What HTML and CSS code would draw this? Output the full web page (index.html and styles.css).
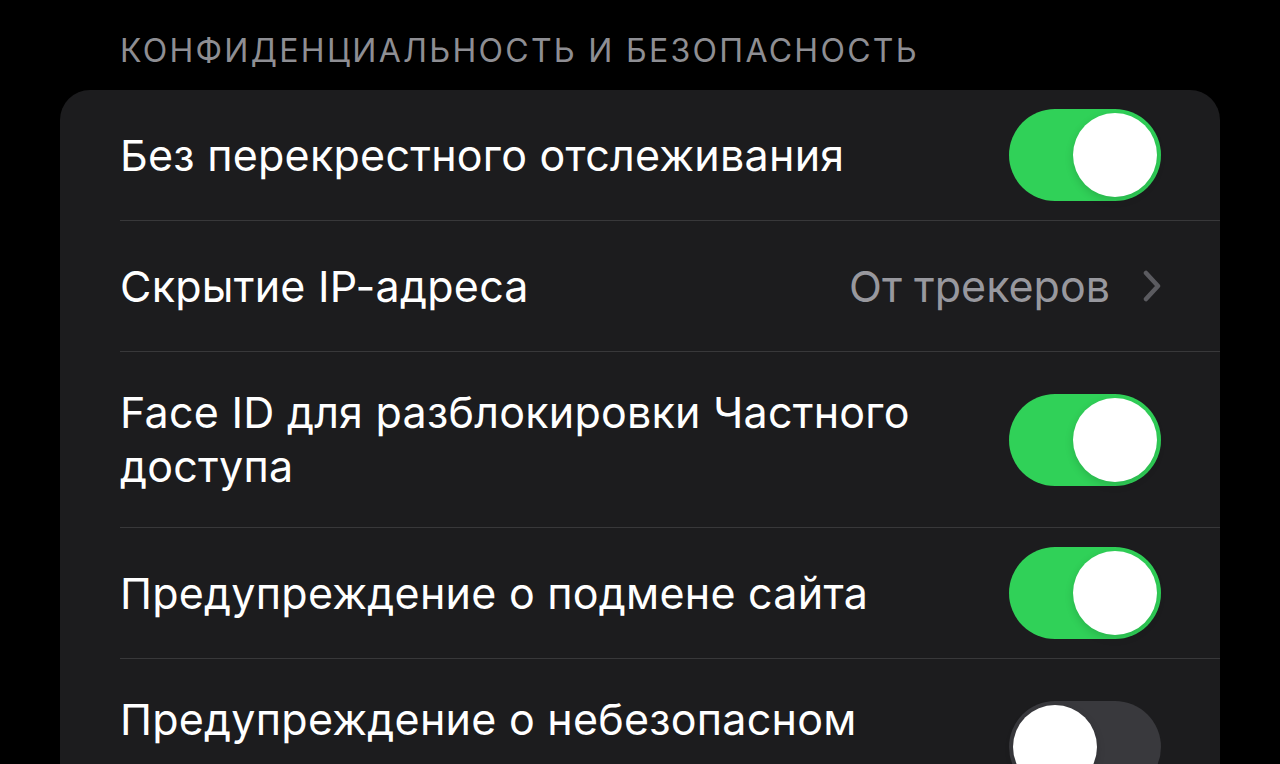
FILE: index.html
```html
<!DOCTYPE html>
<html lang="ru">
<head>
  <meta charset="UTF-8">
  <meta name="viewport" content="width=device-width, initial-scale=1.0">
  <title>Конфиденциальность и безопасность</title>
  <link rel="stylesheet" href="styles.css">
</head>
<body>
  <div class="settings">
    <div class="section-title">КОНФИДЕНЦИАЛЬНОСТЬ И БЕЗОПАСНОСТЬ</div>
    <div class="group">
      <div class="row">
        <div class="row-body">
          <div class="label">Без перекрестного отслеживания</div>
          <div class="switch on" onclick="toggleSwitch(this)"><div class="knob"></div></div>
        </div>
      </div>

      <div class="row">
        <div class="row-body">
          <div class="label">Скрытие IP-адреса</div>
          <div class="detail">
            <span>От трекеров</span>
            <svg class="chevron" width="18" height="32" viewBox="0 0 18 32">
              <path d="M3 3 L15 16 L3 29" fill="none" stroke="currentColor" stroke-width="4.5" stroke-linecap="round" stroke-linejoin="round"/>
            </svg>
          </div>
        </div>
      </div>

      <div class="row">
        <div class="row-body">
          <div class="label">Face ID для разблокировки Частного доступа</div>
          <div class="switch on" onclick="toggleSwitch(this)"><div class="knob"></div></div>
        </div>
      </div>

      <div class="row">
        <div class="row-body">
          <div class="label">Предупреждение о подмене сайта</div>
          <div class="switch on" onclick="toggleSwitch(this)"><div class="knob"></div></div>
        </div>
      </div>

      <div class="row">
        <div class="row-body">
          <div class="label">Предупреждение о небезопасном подключении</div>
          <div class="switch" onclick="toggleSwitch(this)"><div class="knob"></div></div>
        </div>
      </div>
    </div>
  </div>

  <script>
    function toggleSwitch(el) {
      el.classList.toggle('on');
    }
  </script>
</body>
</html>
```

FILE: styles.css
```css
html, body {
  height: 100%;
  overflow: hidden;
}
body {
  background-color: #000;
  color: #fff;
  font-family: Inter, "Noto Sans", sans-serif;
  margin: 0;
}
.settings {
  padding: 0 60px;
}
.section-title {
  color: #8e8e93;
  font-size: 32px;
  line-height: 40px;
  letter-spacing: 2.3px;
  padding: 31px 60px 19px;
}
.group {
  background-color: #1c1c1e;
  border-radius: 30px;
  overflow: hidden;
}
.row {
  padding-left: 60px;
}
.row-body {
  box-sizing: border-box;
  min-height: 131px;
  padding-right: 59px;
  border-bottom: 1px solid #38383a;
  display: flex;
  align-items: center;
  justify-content: space-between;
  gap: 40px;
}
.row:last-child .row-body {
  border-bottom: none;
}
.label {
  font-size: 43px;
  line-height: 54px;
  letter-spacing: 0.25px;
  padding: 33px 0 34px;
  max-width: 800px;
}
.detail {
  display: flex;
  align-items: center;
  gap: 33px;
  color: #98989e;
  font-size: 43px;
  line-height: 54px;
}
.chevron {
  color: #5b5b60;
}
.switch {
  flex-shrink: 0;
  width: 152px;
  height: 92px;
  border-radius: 46px;
  background-color: #39393d;
  position: relative;
  cursor: pointer;
}
.switch.on {
  background-color: #30d158;
}
.knob {
  position: absolute;
  top: 4px;
  left: 4px;
  width: 84px;
  height: 84px;
  border-radius: 50%;
  background-color: #fff;
  box-shadow: 0 3px 8px rgba(0, 0, 0, 0.15);
}
.switch.on .knob {
  left: 64px;
}
```
